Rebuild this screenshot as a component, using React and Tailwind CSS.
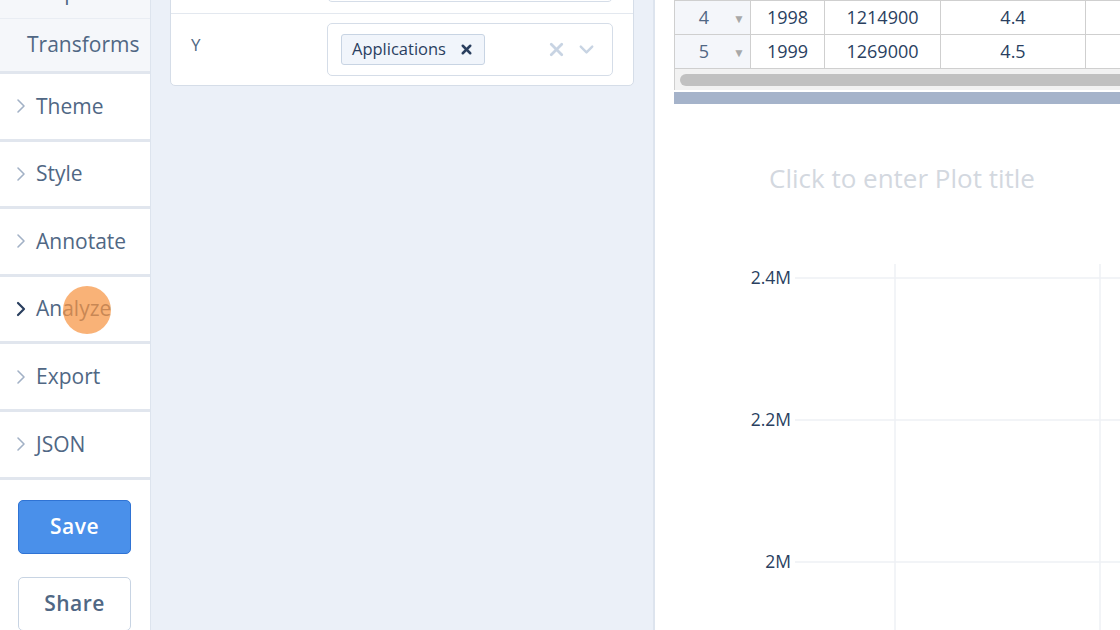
import { ChevronDown, X } from 'lucide-react'

const sections = ['Theme', 'Style', 'Annotate', 'Analyze', 'Export', 'JSON']

function Chevron({ dark }) {
  return (
    <svg width="10" height="16" viewBox="0 0 10 16" className="shrink-0">
      <polyline
        points="2,2 8,8 2,14"
        fill="none"
        stroke={dark ? '#2a3f5f' : '#a2b1c6'}
        strokeWidth={dark ? 2.2 : 1.6}
        strokeLinecap="round"
        strokeLinejoin="round"
      />
    </svg>
  )
}

function Sidebar() {
  return (
    <aside className="w-[151px] shrink-0 h-full flex flex-col bg-white border-r border-[#dde4ee] relative">
      {/* Structure group */}
      <div className="mt-[-33px] bg-[#f5f7fa] border-b-[3px] border-[#e1e6ee]">
        <div className="h-[52px] flex items-center pl-[27px] text-[21px] text-[#506784] border-b border-[#e9edf3]">
          Subplots
        </div>
        <div className="h-[52px] flex items-center pl-[27px] text-[21px] text-[#506784]">
          Transforms
        </div>
      </div>

      {sections.map((s) => (
        <div
          key={s}
          className="h-[67.6px] shrink-0 flex items-center gap-[10px] pl-[16px] border-b-[3px] border-[#e1e6ee] text-[21px] text-[#506784]"
        >
          <Chevron dark={s === 'Analyze'} />
          <span>{s}</span>
        </div>
      ))}

      <div className="flex flex-col gap-[23px] px-[18px] pt-[20px]">
        <button className="h-[54px] w-[113px] rounded-[5px] bg-[#4a90ea] border border-[#2f73d4] text-white text-[21px] font-semibold tracking-[0.5px]">
          Save
        </button>
        <button className="h-[54px] w-[113px] rounded-[5px] bg-white border border-[#c8d4e3] text-[#506784] text-[21px] font-semibold tracking-[0.5px]">
          Share
        </button>
      </div>

      {/* cursor highlight */}
      <div className="absolute left-[63px] top-[286px] w-[48px] h-[48px] rounded-full bg-[rgba(247,148,66,0.72)]" />
    </aside>
  )
}

function Middle() {
  return (
    <section className="w-[504px] shrink-0 h-full bg-[#ebf0f8] border-r-[2px] border-[#dde4ee] px-[19px]">
      <div className="mt-[-62px] bg-white border border-[#d5dde8] rounded-[5px]">
        <div className="flex items-center py-[11px] pl-[20px] pr-[20px] border-b border-[#e3e8ef]">
          <div className="w-[136px]" />
          <div className="flex-1 h-[52px] border border-[#d5dde8] rounded-[5px]" />
        </div>
        <div className="flex items-center py-[9px] pl-[20px] pr-[20px]">
          <div className="w-[136px] text-[17px] text-[#506784] -mt-[10px]">Y</div>
          <div className="flex-1 h-[53px] border border-[#d5dde8] rounded-[5px] flex items-center pl-[13px] pr-[14px]">
            <div className="h-[31px] flex items-center gap-[13px] pl-[10px] pr-[10px] bg-[#f1f5fb] border border-[#c8d4e3] rounded-[3px] text-[16.5px] text-[#2a3f5f]">
              <span>Applications</span>
              <X size={15} strokeWidth={4} className="text-[#2a3f5f]" />
            </div>
            <div className="flex-1" />
            <X size={21} strokeWidth={3.2} className="text-[#c8d4e3]" />
            <ChevronDown size={23} strokeWidth={2.5} className="text-[#c8d4e3] ml-[8px]" />
          </div>
        </div>
      </div>
    </section>
  )
}

const rows = [
  { i: 4, year: '1998', apps: '1214900', rate: '4.4' },
  { i: 5, year: '1999', apps: '1269000', rate: '4.5' },
]

function Table() {
  return (
    <div className="ml-[19px] overflow-hidden">
      <div className="w-[520px] border-l border-t border-[#cfcfcf]">
        {rows.map((r) => (
          <div key={r.i} className="flex h-[34px] border-b border-[#cfcfcf] text-[18px] text-[#2a3f5f]">
            <div className="w-[76px] shrink-0 flex items-center bg-[#f4f6fa] border-r border-[#cfcfcf] text-[#506784]">
              <span className="w-[58px] text-center">{r.i}</span>
              <span className="text-[12px] text-[#a8a8a8] mt-[3px]">▼</span>
            </div>
            <div className="w-[74px] shrink-0 flex items-center justify-center border-r border-[#cfcfcf]">{r.year}</div>
            <div className="w-[116px] shrink-0 flex items-center justify-center border-r border-[#cfcfcf]">{r.apps}</div>
            <div className="w-[145px] shrink-0 flex items-center justify-center border-r border-[#cfcfcf]">{r.rate}</div>
            <div className="flex-1" />
          </div>
        ))}
        <div className="h-[21px] bg-[#f2f2f2] flex items-center pl-[5px]">
          <div className="h-[12px] w-full rounded-full bg-[#c1c1c1]" />
        </div>
      </div>
      <div className="h-[2px] bg-white" />
      <div className="h-[12px] bg-[#a5b3ca]" />
    </div>
  )
}

function Plot() {
  const ticks = [
    { y: 174, label: '2.4M' },
    { y: 316, label: '2.2M' },
    { y: 458, label: '2M' },
  ]
  return (
    <svg width="465" height="528" className="block">
      <text
        x="247"
        y="84"
        textAnchor="middle"
        fontSize="26"
        fill="#d3d8df"
        fontFamily="'Open Sans', sans-serif"
      >
        Click to enter Plot title
      </text>
      {[240, 445].map((x) => (
        <line key={x} x1={x} x2={x} y1="160" y2="528" stroke="#eef1f5" strokeWidth="1.5" />
      ))}
      {ticks.map((t) => (
        <g key={t.label}>
          <line x1="140" x2="465" y1={t.y} y2={t.y} stroke="#eef1f5" strokeWidth="1.5" />
          <text
            x="136"
            y={t.y + 6}
            textAnchor="end"
            fontSize="17.5"
            fill="#2a3f5f"
            fontFamily="'Open Sans', sans-serif"
          >
            {t.label}
          </text>
        </g>
      ))}
    </svg>
  )
}

export default function App() {
  return (
    <div className="w-[1120px] h-[630px] overflow-hidden flex bg-white font-['Open_Sans',sans-serif]">
      <Sidebar />
      <Middle />
      <main className="flex-1 h-full bg-white overflow-hidden">
        <Table />
        <Plot />
      </main>
    </div>
  )
}
